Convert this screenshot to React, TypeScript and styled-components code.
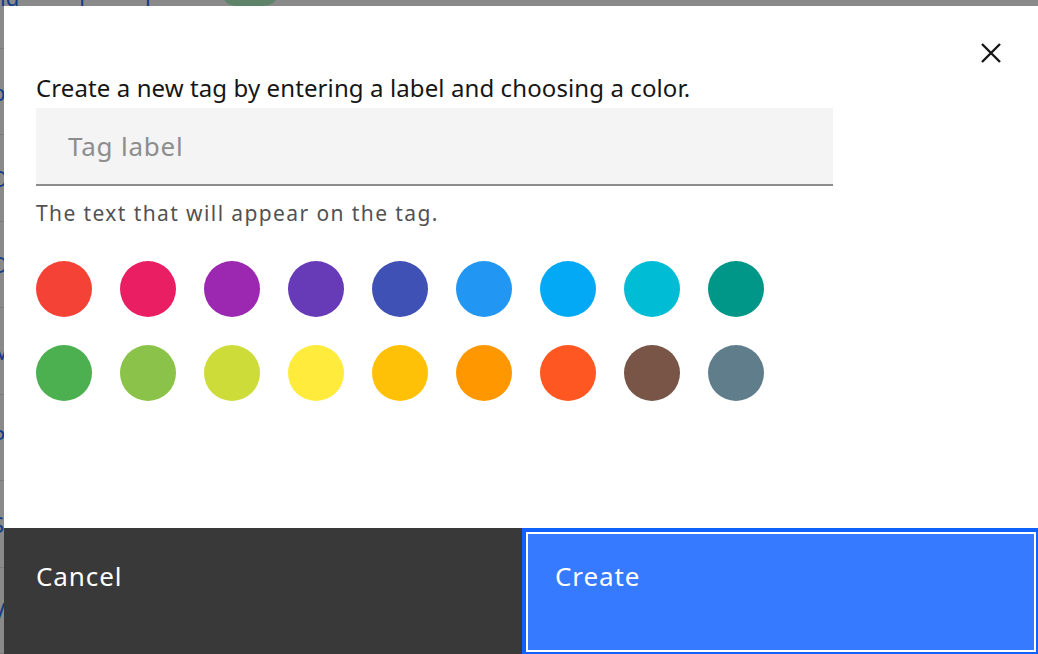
import React from 'react';
import styled, { createGlobalStyle } from 'styled-components';

const GlobalStyle = createGlobalStyle`
	html, body {
		margin: 0;
		padding: 0;
		width: 100%;
		height: 100%;
		overflow: hidden;
		font-family: 'Noto Sans', 'Liberation Sans', sans-serif;
	}
`;

const colors = [
	['#f44336', '#e91e63', '#9c27b0', '#673ab7', '#3f51b5', '#2196f3', '#03a9f4', '#00bcd4', '#009688'],
	['#4caf50', '#8bc34a', '#cddc39', '#ffeb3b', '#ffc107', '#ff9800', '#ff5722', '#795548', '#607d8b'],
];

const backRows = ['blank', 'Documents', 'Downloads', 'Music', 'Pictures', 'Shared', 'Videos'];

const App: React.FC = () => {
	return (
		<>
			<GlobalStyle />
			<Page>
				<PageHeader>
					<span>ld</span>
					<span>l</span>
					<span>l</span>
					<Pill />
				</PageHeader>
				{backRows.map((row) => (
					<PageRow key={row}>{row}</PageRow>
				))}
			</Page>
			<Overlay>
				<Modal role='dialog'>
					<Header>
						<CloseButton aria-label='Close'>
							<svg width='20' height='20' viewBox='0 0 20 20'>
								<path d='M1 1 L19 19 M19 1 L1 19' stroke='#161616' strokeWidth='2.4' />
							</svg>
						</CloseButton>
					</Header>
					<Body>
						<Title>Create a new tag by entering a label and choosing a color.</Title>
						<Field placeholder='Tag label' />
						<Helper>The text that will appear on the tag.</Helper>
						<Swatches>
							{colors.flat().map((c) => (
								<Swatch key={c} $color={c} />
							))}
						</Swatches>
					</Body>
					<Footer>
						<FooterButton $kind='secondary'>Cancel</FooterButton>
						<FooterButton $kind='primary'>Create</FooterButton>
					</Footer>
				</Modal>
			</Overlay>
		</>
	);
};

export default App;

const Page = styled.div`
	background: #fff;
	height: 100vh;
	display: flex;
	flex-direction: column;
`;

const PageHeader = styled.div`
	height: 78px;
	display: flex;
	gap: 60px;
	align-items: flex-start;
	margin-top: -18px;
	color: #0f62fe;
	font-size: 22px;
	border-bottom: 1px solid #e0e0e0;
	box-sizing: border-box;
`;

const Pill = styled.span`
	width: 58px;
	height: 30px;
	margin-top: -6px;
	margin-left: 10px;
	border-radius: 15px;
	background: #a7f0ba;
`;

const PageRow = styled.div`
	height: 100px;
	display: flex;
	align-items: center;
	margin-left: -8px;
	color: #0f62fe;
	font-size: 22px;
	border-bottom: 1px solid #e0e0e0;
`;

const Overlay = styled.div`
	position: fixed;
	inset: 0;
	background: rgba(22, 22, 22, 0.5);
`;

const Modal = styled.div`
	position: absolute;
	left: 4px;
	top: 6px;
	width: 1036px;
	height: 650px;
	background: #fff;
	display: flex;
	flex-direction: column;
`;

const Header = styled.div`
	height: 66px;
	display: flex;
	justify-content: flex-end;
	align-items: flex-start;
	padding: 23px 25px 0 0;
	box-sizing: border-box;
`;

const CloseButton = styled.button`
	width: 48px;
	height: 48px;
	border: none;
	background: transparent;
	display: flex;
	align-items: center;
	justify-content: center;
	padding: 0;
	cursor: pointer;
`;

const Body = styled.div`
	flex: 1;
	padding: 0 32px;
	display: flex;
	flex-direction: column;
`;

const Title = styled.p`
	margin: 0 0 4px;
	font-size: 24px;
	letter-spacing: 0.1px;
	line-height: 32px;
	color: #161616;
`;

const Field = styled.input`
	width: 797px;
	height: 78px;
	box-sizing: border-box;
	border: none;
	border-bottom: 2px solid #8d8d8d;
	background: #f4f4f4;
	padding: 0 32px;
	font-family: inherit;
	font-size: 26px;
	letter-spacing: 0.8px;
	color: #161616;
	outline: none;

	&::placeholder {
		color: #8d8d8d;
	}
`;

const Helper = styled.div`
	margin-top: 14px;
	font-size: 21px;
	letter-spacing: 1.4px;
	line-height: 26px;
	color: #525252;
`;

const Swatches = styled.div`
	margin-top: 35px;
	display: grid;
	grid-template-columns: repeat(9, 56px);
	gap: 28px;
`;

const Swatch = styled.button<{ $color: string }>`
	width: 56px;
	height: 56px;
	border-radius: 50%;
	border: none;
	padding: 0;
	background: ${({ $color }) => $color};
	cursor: pointer;
`;

const Footer = styled.div`
	height: 128px;
	display: grid;
	grid-template-columns: 518px 1fr;
`;

const FooterButton = styled.button<{ $kind: 'primary' | 'secondary' }>`
	border: none;
	margin: 0;
	display: flex;
	align-items: flex-start;
	box-sizing: border-box;
	font-family: inherit;
	font-size: 26px;
	letter-spacing: 0.9px;
	line-height: 32px;
	color: #fff;
	text-align: left;
	cursor: pointer;
	background: ${({ $kind }) => ($kind === 'primary' ? '#357aff' : '#393939')};
	padding: ${({ $kind }) => ($kind === 'primary' ? '28px 29px' : '32px 32px')};
	${({ $kind }) =>
		$kind === 'primary' &&
		`
		border: 4px solid #0f62fe;
		box-shadow: inset 0 0 0 2px #fff;
	`}
`;
